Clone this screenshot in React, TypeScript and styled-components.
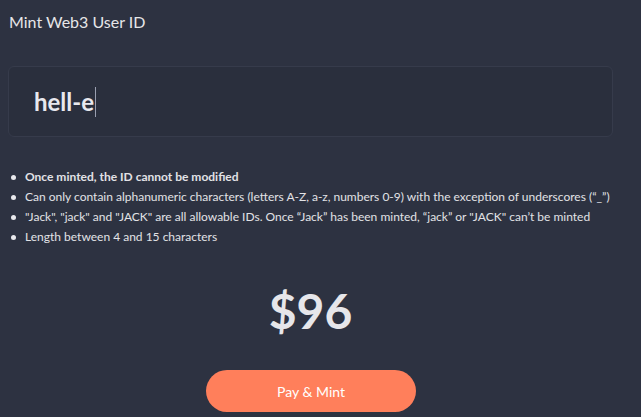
import React from "react";
import styled, { createGlobalStyle } from "styled-components";

const Global = createGlobalStyle`
  html, body { margin: 0; padding: 0; background: #2d3241; }
  body { font-family: Lato, "Noto Sans", sans-serif; color: #e4e4e6; }
`;

const Page = styled.div`
  width: 641px;
  height: 417px;
  box-sizing: border-box;
  padding: 11px 28px 0 8px;
  display: flex;
  flex-direction: column;
  background: #2d3241;
  overflow: hidden;
`;

const Title = styled.h1`
  margin: 0 0 0 1px;
  font-size: 16px;
  font-weight: 400;
  line-height: 22px;
  color: #e6e6e8;
`;

const InputBox = styled.div`
  margin-top: 33px;
  height: 71px;
  box-sizing: border-box;
  border: 1px solid #363b4b;
  border-radius: 6px;
  background: #2a2f3d;
  display: flex;
  align-items: center;
  padding-left: 25px;
`;

const Value = styled.span`
  font-size: 24px;
  font-weight: 700;
  color: #e8e8ee;
  line-height: 30px;
`;

const Caret = styled.span`
  display: inline-block;
  width: 1px;
  height: 30px;
  background: #9a9fb0;
  margin-left: 1px;
  vertical-align: middle;
`;

const Rules = styled.ul`
  margin: 30px 0 0 0;
  padding: 0;
  list-style: none;
  display: flex;
  flex-direction: column;
`;

const Rule = styled.li<{ $strong?: boolean }>`
  display: flex;
  align-items: center;
  gap: 9px;
  font-size: 12px;
  line-height: 20px;
  color: #e2e2e6;
  font-weight: ${(p) => (p.$strong ? 700 : 400)};
  padding-left: 3px;
  &::before {
    content: "";
    width: 5px;
    height: 5px;
    border-radius: 50%;
    background: #e8e8ec;
    flex: none;
  }
`;

const Price = styled.div`
  margin-top: 34px;
  text-align: center;
  font-size: 48px;
  font-weight: 700;
  line-height: 60px;
  color: #e6e6ea;
`;

const Button = styled.button`
  align-self: flex-start;
  margin: 29px 0 0 198px;
  width: 210px;
  height: 42px;
  border: none;
  border-radius: 21px;
  background: #ff7f5b;
  color: #ffffff;
  font-family: Lato, "Noto Sans", sans-serif;
  font-size: 14px;
  font-weight: 400;
  cursor: pointer;
`;

export default function App() {
  return (
    <>
      <Global />
      <Page>
        <Title>Mint Web3 User ID</Title>
        <InputBox>
          <Value>hell-e</Value>
          <Caret />
        </InputBox>
        <Rules>
          <Rule $strong>Once minted, the ID cannot be modified</Rule>
          <Rule>
            Can only contain alphanumeric characters (letters A-Z, a-z, numbers 0-9) with the exception of underscores (“_”)
          </Rule>
          <Rule>
            "Jack", "jack" and "JACK" are all allowable IDs. Once “Jack” has been minted, “jack” or "JACK" can’t be minted
          </Rule>
          <Rule>Length between 4 and 15 characters</Rule>
        </Rules>
        <Price>$96</Price>
        <Button>Pay &amp; Mint</Button>
      </Page>
    </>
  );
}
